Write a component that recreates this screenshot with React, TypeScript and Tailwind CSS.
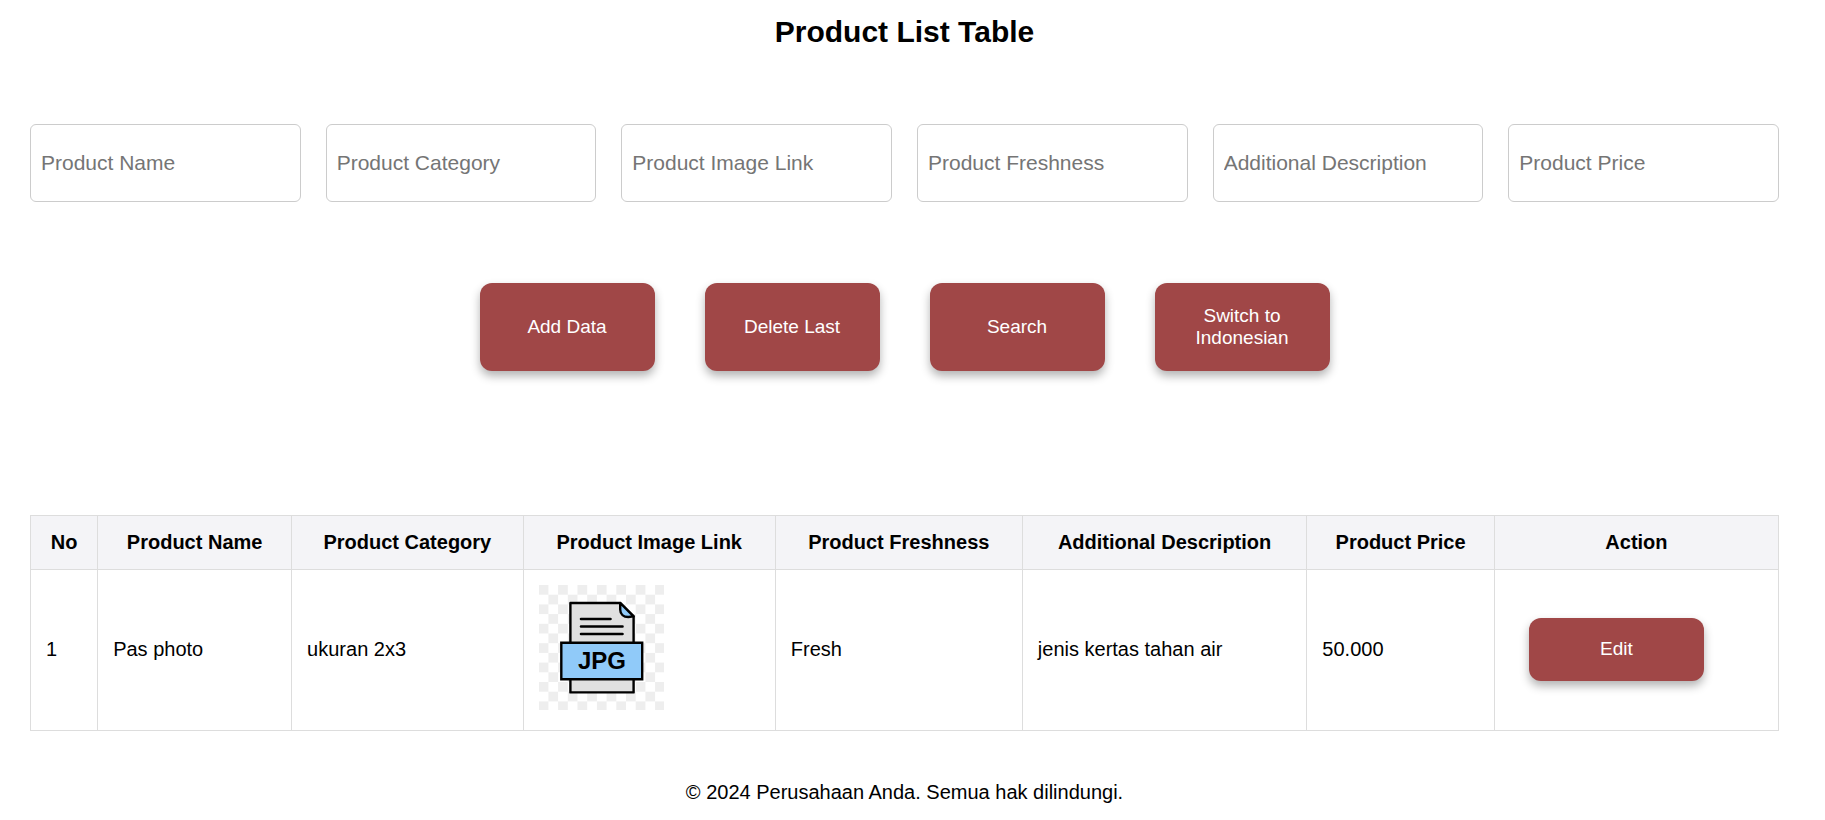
const fields = [
  "Product Name",
  "Product Category",
  "Product Image Link",
  "Product Freshness",
  "Additional Description",
  "Product Price",
];

const actions = ["Add Data", "Delete Last", "Search", "Switch to Indonesian"];

const buttonBase =
  "w-[175px] cursor-pointer rounded-xl bg-[#a04747] px-6 text-[19px] leading-[22px] text-white shadow-[0_5px_10px_rgba(0,0,0,0.3)]";

function JpgImage() {
  return (
    <svg viewBox="0 0 125 125" className="block size-[125px]" role="img" aria-label="JPG">
      <defs>
        <pattern id="checker" x="-0.3" width="19.4" height="19.4" patternUnits="userSpaceOnUse">
          <rect width="9.7" height="9.7" fill="#eeeeee" />
          <rect x="9.7" y="9.7" width="9.7" height="9.7" fill="#eeeeee" />
        </pattern>
      </defs>
      <rect width="125" height="125" fill="#ffffff" />
      <rect width="125" height="125" fill="url(#checker)" />
      <g stroke="#000000" strokeWidth="2.4" strokeLinejoin="round" strokeLinecap="round">
        <path d="M31.4 18H81.4L94.6 31.4V107.4H31.4Z" fill="#e0e0e0" />
        <path d="M81.2 18V24.5C81.2 29.5 84.7 32 89.2 32L94.6 31.4Z" fill="#90caf9" />
        <path d="M42 34H71.5M42 41.5H83.5M42 49H83.5" strokeWidth="2.6" fill="none" />
        <path d="M22.3 57.8H103.2V94.2H22.3Z" fill="#90caf9" strokeLinejoin="miter" />
      </g>
      <text
        x="62.9"
        y="84.4"
        textAnchor="middle"
        className="font-['Liberation_Sans',Arial,sans-serif] text-[24px] font-bold"
      >
        JPG
      </text>
    </svg>
  );
}

export default function App() {
  return (
    <div className="bg-white pt-[15px] pr-[46px] pb-3 pl-[30px] font-['Liberation_Sans',Arial,sans-serif] text-[20px] leading-[23px] text-black">
      <h1 className="text-center text-[30px] leading-[34px] font-bold">Product List Table</h1>

      <form className="mt-[75px]" onSubmit={(e) => e.preventDefault()}>
        <div className="grid grid-cols-6 gap-[25px]">
          {fields.map((field) => (
            <input
              key={field}
              type="text"
              aria-label={field}
              placeholder={field}
              className="h-[78px] w-full min-w-0 rounded-md border border-[#cccccc] bg-white px-2.5 text-[21px] placeholder:text-[#757575]"
            />
          ))}
        </div>
        <div className="mt-[81px] flex flex-wrap justify-center gap-[50px]">
          {actions.map((action) => (
            <button key={action} type="button" className={`${buttonBase} h-[88px]`}>
              {action}
            </button>
          ))}
        </div>
      </form>

      <table className="mt-36 w-full border-collapse [&_td]:border [&_td]:border-[#dddddd] [&_td]:px-[15px] [&_td]:pb-0.5 [&_th]:border [&_th]:border-[#dddddd] [&_th]:p-[15px]">
        <thead className="bg-[#f4f4f7]">
          <tr>
            <th scope="col">No</th>
            {fields.map((field) => (
              <th key={field} scope="col">
                {field}
              </th>
            ))}
            <th scope="col">Action</th>
          </tr>
        </thead>
        <tbody>
          <tr>
            <td>1</td>
            <td>Pas photo</td>
            <td>ukuran 2x3</td>
            <td>
              <div className="pt-[15px] pb-[18px]">
                <JpgImage />
              </div>
            </td>
            <td>Fresh</td>
            <td>jenis kertas tahan air</td>
            <td>50.000</td>
            <td>
              <button type="button" className={`${buttonBase} mx-[19px] h-[63px]`}>
                Edit
              </button>
            </td>
          </tr>
        </tbody>
      </table>

      <footer className="mt-[50px] text-center">© 2024 Perusahaan Anda. Semua hak dilindungi.</footer>
    </div>
  );
}
